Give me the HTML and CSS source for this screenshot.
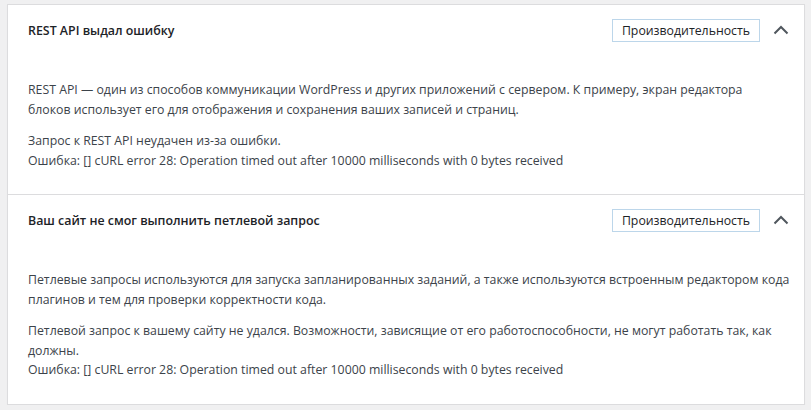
FILE: index.html
```html
<!DOCTYPE html>
<html lang="ru">
<head>
    <meta charset="UTF-8">
    <meta name="viewport" content="width=device-width, initial-scale=1.0">
    <title>Здоровье сайта</title>
    <link rel="stylesheet" href="styles.css">
</head>
<body>
    <div class="accordion">
        <div class="item">
            <div class="item-head">
                <h4 class="item-title">REST API выдал ошибку</h4>
                <span class="badge">Производительность</span>
                <span class="chevron">
                    <svg width="16" height="10" viewBox="0 0 16 10"><path d="M1.5 8.5 L8 2 L14.5 8.5" fill="none" stroke="#50575e" stroke-width="2"/></svg>
                </span>
            </div>
            <div class="item-body">
                <p>REST API — один из способов коммуникации WordPress и других приложений с сервером. К примеру, экран редактора<br>блоков использует его для отображения и сохранения ваших записей и страниц.</p>
                <p>Запрос к REST API неудачен из-за ошибки.<br>Ошибка: [] cURL error 28: Operation timed out after 10000 milliseconds with 0 bytes received</p>
            </div>
        </div>

        <div class="item">
            <div class="item-head">
                <h4 class="item-title">Ваш сайт не смог выполнить петлевой запрос</h4>
                <span class="badge">Производительность</span>
                <span class="chevron">
                    <svg width="16" height="10" viewBox="0 0 16 10"><path d="M1.5 8.5 L8 2 L14.5 8.5" fill="none" stroke="#50575e" stroke-width="2"/></svg>
                </span>
            </div>
            <div class="item-body">
                <p>Петлевые запросы используются для запуска запланированных заданий, а также используются встроенным редактором кода плагинов и тем для проверки корректности кода.</p>
                <p>Петлевой запрос к вашему сайту не удался. Возможности, зависящие от его работоспособности, не могут работать так, как должны.<br>Ошибка: [] cURL error 28: Operation timed out after 10000 milliseconds with 0 bytes received</p>
            </div>
        </div>
    </div>
</body>
</html>
```

FILE: styles.css
```css
* {
    margin: 0;
    padding: 0;
    box-sizing: border-box;
}

body {
    background: #f0f0f1;
    font-family: 'Open Sans', 'Noto Sans', sans-serif;
    font-size: 12.3px;
    color: #3c434a;
    padding: 4px 6px 0 7px;
}

.accordion {
    background: #fff;
    border: 1px solid #dcdcde;
    box-shadow: 0 1px 1px rgba(0, 0, 0, 0.04);
}

.item + .item {
    border-top: 1px solid #dcdcde;
}

.item-head {
    display: flex;
    align-items: center;
    height: 50px;
    padding: 0 15px 0 20px;
}

.item-title {
    flex: 1;
    font-size: 12.4px;
    font-weight: 600;
    color: #1d2327;
}

.badge {
    border: 1px solid #bcd6ea;
    padding: 2px 9px;
    line-height: 17px;
    color: #1d2327;
}

.chevron {
    display: flex;
    margin-left: 13px;
    width: 16px;
}

.item-body {
    padding: 25px 10px 24px 20px;
    line-height: 19.5px;
}

.item-body p + p {
    margin-top: 12px;
}
```
